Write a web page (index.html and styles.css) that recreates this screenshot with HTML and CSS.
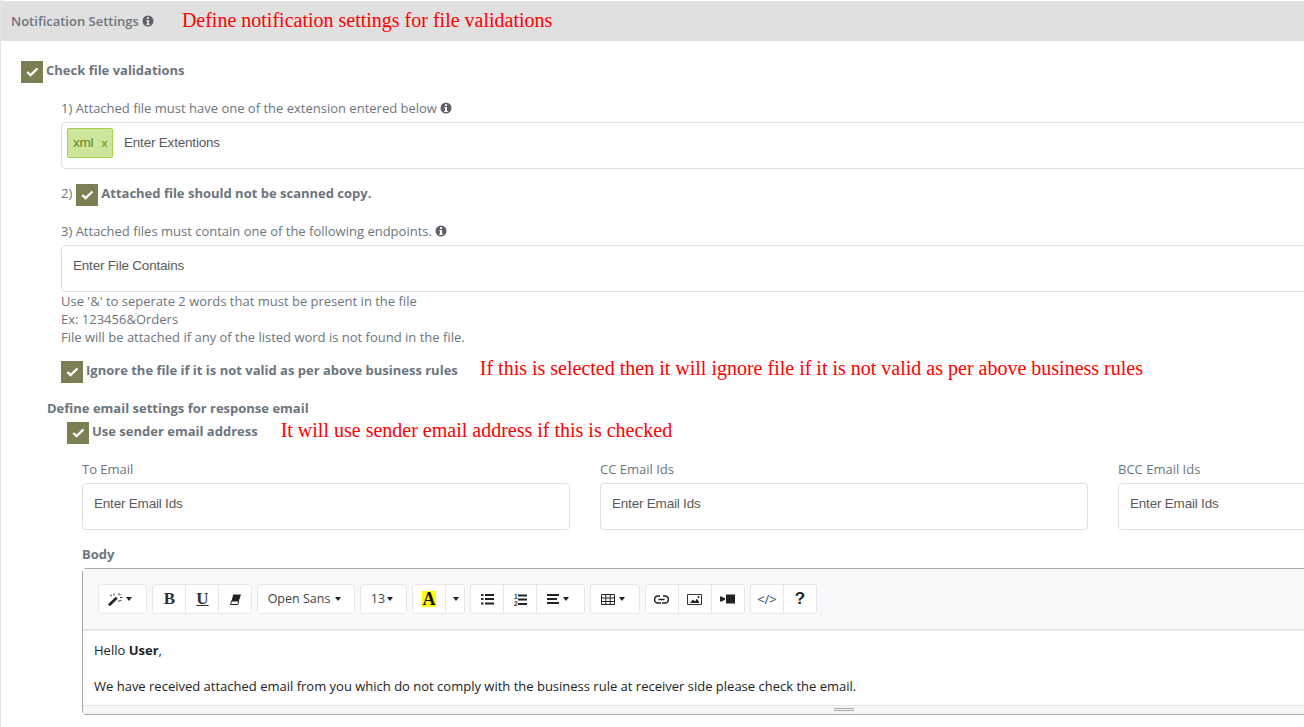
FILE: index.html
```html
<!DOCTYPE html>
<html lang="en">
<head>
<meta charset="utf-8">
<title>Notification Settings</title>
<link rel="stylesheet" href="styles.css">
</head>
<body>
<svg class="defs" width="0" height="0" aria-hidden="true">
  <symbol id="info" viewBox="0 0 24 24"><path fill-rule="evenodd" d="M12 1a11 11 0 1 0 0 22 11 11 0 0 0 0-22zm-2 3.500h4v3.500h-4zM9 10h5v7.500h1.500V20h-7v-2.500H10V12.500H9z"/></symbol>
  <symbol id="check" viewBox="0 0 22 22"><path d="M6.300 11l3.300 3.200L16.500 7.500" fill="none" stroke="#fff" stroke-width="2.400"/></symbol>
</svg>
<div class="page">
  <header class="panel-head">
    <span class="panel-title">Notification Settings</span>
    <svg class="info"><use href="#info"/></svg>
    <span class="note note-head">Define notification settings for file validations</span>
  </header>
  <main class="panel-body">
    <div class="check-row">
      <span class="box"><svg><use href="#check"/></svg></span>
      <span class="strong">Check file validations</span>
    </div>
    <div class="indent">
      <div class="label gap-16">1) Attached file must have one of the extension entered below <svg class="info info-inline"><use href="#info"/></svg></div>
      <div class="field tags">
        <span class="chip">xml<b class="chip-x">x</b></span>
        <span class="ph">Enter Extentions</span>
      </div>
      <div class="check-row gap-15">
        <span class="num">2)</span>
        <span class="box"><svg><use href="#check"/></svg></span>
        <span class="strong">Attached file should not be scanned copy.</span>
      </div>
      <div class="label gap-16">3) Attached files must contain one of the following endpoints. <svg class="info info-inline"><use href="#info"/></svg></div>
      <div class="field"><span class="ph">Enter File Contains</span></div>
      <div class="help">
        <div>Use '&amp;' to seperate 2 words that must be present in the file</div>
        <div>Ex: 123456&amp;Orders</div>
        <div>File will be attached if any of the listed word is not found in the file.</div>
      </div>
      <div class="check-row gap-15">
        <span class="box"><svg><use href="#check"/></svg></span>
        <span class="strong">Ignore the file if it is not valid as per above business rules</span>
        <span class="note note-ignore">If this is selected then it will ignore file if it is not valid as per above business rules</span>
      </div>
    </div>
    <div class="define">
      <div class="strong">Define email settings for response email</div>
      <div class="check-row sender">
        <span class="box"><svg><use href="#check"/></svg></span>
        <span class="strong">Use sender email address</span>
        <span class="note note-sender">It will use sender email address if this is checked</span>
      </div>
    </div>
    <div class="mail">
      <div class="mail-grid">
        <div>
          <div class="label">To Email</div>
          <div class="field"><span class="ph">Enter Email Ids</span></div>
        </div>
        <div>
          <div class="label">CC Email Ids</div>
          <div class="field"><span class="ph">Enter Email Ids</span></div>
        </div>
        <div>
          <div class="label">BCC Email Ids</div>
          <div class="field"><span class="ph">Enter Email Ids</span></div>
        </div>
      </div>
      <div class="strong gap-15">Body</div>
      <div class="editor">
        <div class="toolbar">
          <div class="group"><span class="btn w47 start-9">
            <svg width="15" height="13" viewBox="0 0 15 13"><path d="M0 11.300L7.800 3.800l1.900 1.900L1.900 13.200z" fill="#222"/><path d="M6 .5v2M11 0v2M11 7v2M12 4.500h2.500M4 3l-2-1M13 1.500l-1 1M13.500 8l-1.500-1" stroke="#333" stroke-width="1"/></svg><i class="caret caret-wand"></i>
          </span></div>
          <div class="group">
            <span class="btn w33 serif nudge-r">B</span>
            <span class="btn w34 serif nudge-r">
              <span class="under">U</span>
            </span>
            <span class="btn w34"><svg width="11" height="11" viewBox="0 0 11 11"><path d="M3.200.5H11L8.800 7H1.500z" fill="#222"/><path d="M1.500 7h7.300l-1 3.500H.5z" fill="#fff" stroke="#222"/></svg></span>
          </div>
          <div class="group"><span class="btn w98 plain nudge-l3">Open Sans<i class="caret caret-text"></i></span></div>
          <div class="group"><span class="btn w45 plain nudge-l3">13<i class="caret caret-num"></i></span></div>
          <div class="group">
            <span class="btn w33"><span class="hl">A</span></span>
            <span class="btn w19"><i class="caret"></i></span>
          </div>
          <div class="group">
            <span class="btn w33"><svg width="13" height="11" viewBox="0 0 13 11"><path d="M0 0h2.500v2H0zM0 4h2.500v2H0zM0 8.500h2.500v2H0z" fill="#333"/><path d="M4 1h9M4 5h9M4 9.500h9" stroke="#222" stroke-width="2"/></svg></span>
            <span class="btn w34"><svg width="13" height="13" viewBox="0 0 13 13"><path d="M4 2.500h9M4 6.500h9M4 11h9" stroke="#222" stroke-width="1.800"/><text x="0" y="5.500" class="mini">1</text><text x="0" y="12.500" class="mini">2</text></svg></span>
            <span class="btn w48 start-10"><svg width="12" height="10" viewBox="0 0 12 10"><path d="M0 1h12M0 5h10M0 9h12" stroke="#222" stroke-width="1.800"/></svg><i class="caret caret-gap"></i></span>
          </div>
          <div class="group"><span class="btn w48 start-10"><svg width="14" height="11" viewBox="0 0 14 11"><path d="M.5.500h13v10H.5zM.5 4h13M.5 7.500h13M4.800.500v10M9.200.500v10" fill="none" stroke="#222"/></svg><i class="caret caret-gap"></i></span></div>
          <div class="group">
            <span class="btn w33 nudge-l"><svg width="15" height="9" viewBox="0 0 15 9"><path d="M6 1H4a3.500 3.500 0 0 0 0 7h3M9 1h2a3.500 3.500 0 0 1 0 7H8M4.500 4.500h6" fill="none" stroke="#222" stroke-width="1.600"/></svg></span>
            <span class="btn w34 nudge-l"><svg width="15" height="11" viewBox="0 0 15 11"><path d="M.5.500h14v10H.5z" fill="none" stroke="#333"/><path d="M3 9l3-3.500 2 2 2-3 2.500 4.500z" fill="#222"/><circle cx="11.500" cy="3" r="1" fill="#222"/></svg></span>
            <span class="btn w34 nudge-l"><svg width="15" height="10" viewBox="0 0 15 10"><rect x="6" y=".5" width="9" height="9" fill="#222"/><path d="M0 2.500h1.500L5 4.200v1.600L1.500 7.500H0z" fill="#222"/></svg></span>
          </div>
          <div class="group">
            <span class="btn w33 code">&lt;/&gt;</span>
            <span class="btn w34 quest">?</span>
          </div>
        </div>
        <div class="content">
          <p>Hello <b>User</b>,</p>
          <p>We have received attached email from you which do not comply with the business rule at receiver side please check the email.</p>
        </div>
        <div class="resize"><i></i></div>
      </div>
    </div>
  </main>
</div>
</body>
</html>
```
FILE: styles.css
```css
html, body { margin: 0; padding: 0; height: 100%; overflow: hidden; background: #fff; }
body { font-family: "Open Sans", sans-serif; font-size: 13px; line-height: 18px; color: #6c757d; }
.defs { display: block; height: 0; }
.page { width: 1304px; height: 727px; overflow: hidden; border-left: 1px solid #e4e4e4; box-sizing: border-box; }
.panel-head { margin-top: 1px; height: 40px; background: #e0e0e0; display: flex; align-items: center; padding-left: 10px; }
.panel-title { font-weight: 600; }
.info { width: 12px; height: 12px; fill: #5f6368; margin-left: 3px; flex: none; }
.info-inline { margin-left: 0; vertical-align: -1px; }
.note { font-family: "Liberation Serif", serif; color: #f00; font-size: 20px; line-height: 22px; white-space: nowrap; }
.note-head { margin-left: 28px; margin-top: -2px; }
.note-ignore { margin-left: 22px; margin-top: -4px; }
.note-sender { margin-left: 23px; margin-top: -3px; }
.panel-body { padding: 20px 0 0 20px; }
.check-row { display: flex; align-items: flex-start; height: 22px; white-space: nowrap; }
.box { width: 22px; height: 22px; background: #7c7f54; flex: none; margin-right: 3px; display: block; }
.box svg { width: 22px; height: 22px; display: block; }
.strong { font-weight: 700; }
.num { margin-right: 4px; }
.indent { padding-left: 40px; }
.gap-16 { margin-top: 16px; }
.gap-15 { margin-top: 15px; }
.label { white-space: nowrap; }
.field { margin-top: 5px; height: 47px; box-sizing: border-box; border: 1px solid #e0e0e0; border-radius: 4px; display: flex; align-items: center; padding: 0 11px; font-family: "Liberation Sans", sans-serif; font-size: 13.500px; letter-spacing: -.2px; color: #5a5a5a; background: #fff; }
.indent .field { margin-right: -24px; }
.tags { padding-left: 5px; align-items: flex-start; padding-top: 5px; }
.field .ph { position: relative; top: -3px; }
.tags .ph { top: 1px; line-height: 28px; margin-left: 11px; }
.chip { width: 46px; height: 30px; box-sizing: border-box; background: #cde69c; border: 1px solid #a5d24a; border-radius: 2px; color: #638421; line-height: 28px; padding-left: 5px; flex: none; }
.chip-x { margin-left: 8px; font-size: 11px; color: #7da52f; }
.define { margin: 16px 0 0 26px; }
.sender { margin: 5px 0 0 20px; }
.mail { margin: 16px 0 0 61px; }
.mail-grid { display: grid; grid-template-columns: repeat(3, 488px); column-gap: 30px; width: 1500px; }
.editor { margin-top: 5px; width: 1400px; height: 147px; box-sizing: border-box; border: 1px solid #a9a9a9; border-radius: 4px; display: flex; flex-direction: column; }
.toolbar { height: 62px; box-sizing: border-box; padding: 15px 0 0 15px; background: #f8f9fa; border-bottom: 2px solid #e6e6e6; display: flex; gap: 5px; align-items: flex-start; flex: none; }
.group { display: flex; height: 30px; box-sizing: border-box; background: #fff; border: 1px solid #e6e8ec; border-radius: 3px; }
.btn { display: flex; align-items: center; justify-content: center; height: 28px; box-sizing: border-box; border-left: 1px solid #e6e8ec; color: #333; }
.btn:first-child { border-left: 0; }
.start-9 { justify-content: flex-start; padding-left: 9px; }
.start-10 { justify-content: flex-start; padding-left: 10px; }
.nudge-l { padding-right: 2px; }
.nudge-l3 { padding-right: 3px; }
.nudge-r { padding-left: 1px; }
.w19 { width: 19px; }
.w33 { width: 32px; }
.w34 { width: 33px; }
.w45 { width: 45px; }
.w47 { width: 47px; }
.w48 { width: 48px; }
.w98 { width: 96px; }
.serif { font-family: "Liberation Serif", serif; font-weight: 700; font-size: 17px; }
.under { text-decoration: underline; }
.plain { font-size: 12.500px; color: #444; white-space: nowrap; }
.caret { width: 0; height: 0; border-left: 3px solid transparent; border-right: 3px solid transparent; border-top: 4px solid #222; margin-left: 1px; display: block; }
.caret-text { margin-left: 5px; }
.caret-num { margin-left: 2px; }
.caret-gap { margin-left: 4px; }
.caret-wand { margin-left: 3px; }
.hl { background: #ff0; color: #111; font-family: "Liberation Serif", serif; font-weight: 700; font-size: 18px; line-height: 16px; padding: 0 .5px; }
.mini { font: 700 6.500px "Liberation Sans", sans-serif; fill: #333; }
.code { font-size: 13px; color: #2f3f55; }
.quest { font-family: "Liberation Sans", sans-serif; font-weight: 700; font-size: 17px; color: #222; }
.content { flex: 1; min-height: 0; overflow: hidden; padding: 10px 11px 0; color: #222; background: #fff; }
.content p { margin: 0 0 18px; white-space: nowrap; }
.resize { height: 9px; box-sizing: border-box; background: #f5f5f5; border-top: 1px solid #e4e4e4; padding: 2px 0 0 751px; flex: none; }
.resize i { display: block; width: 20px; height: 5px; border-top: 1px solid #aaa; border-bottom: 1px solid #aaa; background: linear-gradient(#aaa, #aaa) 0 1px / 100% 1px no-repeat; }
```
